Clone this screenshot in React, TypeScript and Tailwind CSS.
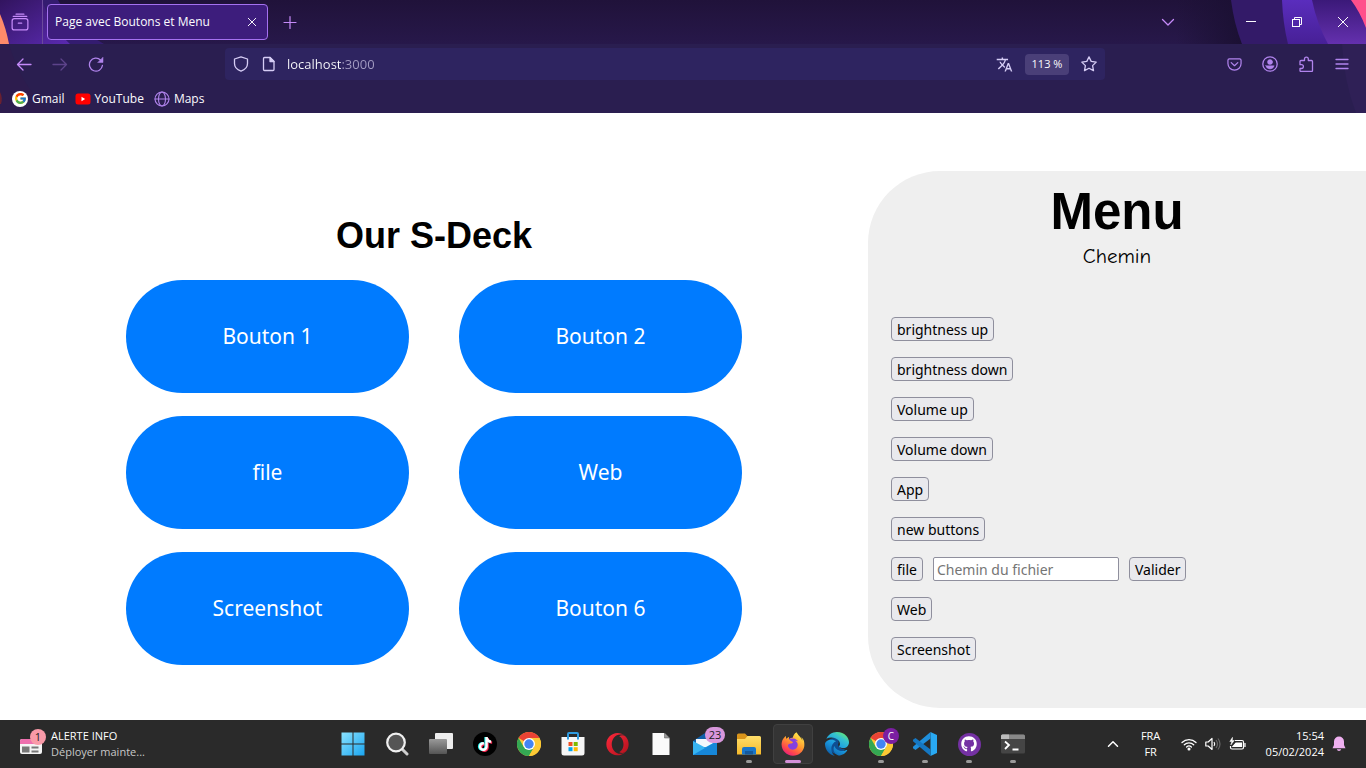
import type { ReactNode } from "react";
import { FcGoogle } from "react-icons/fc";
import { FaTiktok, FaGithub, FaEdge, FaFirefoxBrowser, FaOpera } from "react-icons/fa6";
import { VscVscode } from "react-icons/vsc";
import { MdTranslate } from "react-icons/md";

const deckButtons = ["Bouton 1", "Bouton 2", "file", "Web", "Screenshot", "Bouton 6"];
const menuButtons = ["brightness up", "brightness down", "Volume up", "Volume down", "App", "new buttons"];

function Stroke({ children, size = 16, width = 1.3 }: { children: ReactNode; size?: number; width?: number }) {
  return (
    <svg
      width={size}
      height={size}
      viewBox="0 0 16 16"
      fill="none"
      stroke="currentColor"
      strokeWidth={width}
      strokeLinecap="round"
      strokeLinejoin="round"
      aria-hidden="true"
    >
      {children}
    </svg>
  );
}

function ToolButton({ label, className = "", children }: { label: string; className?: string; children: ReactNode }) {
  return (
    <button type="button" aria-label={label} className={`flex h-8 w-9 items-center justify-center ${className}`}>
      {children}
    </button>
  );
}

function ThemeArt() {
  return (
    <>
      <svg className="pointer-events-none absolute left-0 top-0" width="130" height="113" aria-hidden="true">
        <defs>
          <linearGradient id="leftViolet" x1="0" y1="0" x2="1" y2="1">
            <stop offset="0" stopColor="#32145f" />
            <stop offset="1" stopColor="#5a2ab0" />
          </linearGradient>
        </defs>
        <path d="M0 0H58Q72 26 104 44H0Z" fill="#341c70" />
        <path d="M0 0H42Q50 26 70 44H0Z" fill="url(#leftViolet)" />
        <path d="M0 14Q6 28 9 44H0Z" fill="#ff8a6a" />
        <path d="M0 44H9Q20 84 50 113H0Z" fill="#2d1c4e" />
        <path d="M0 92Q3 98 1 104H0Z" fill="#6a2030" />
      </svg>
      <svg className="pointer-events-none absolute right-0 top-0" width="190" height="113" aria-hidden="true">
        <defs>
          <linearGradient id="rightViolet" x1="0" y1="0" x2="0" y2="1">
            <stop offset="0" stopColor="#5a2dbd" />
            <stop offset="1" stopColor="#472096" />
          </linearGradient>
          <linearGradient id="rightPlum" x1="0" y1="0" x2="0" y2="1">
            <stop offset="0" stopColor="#3b1979" />
            <stop offset="1" stopColor="#6430ae" />
          </linearGradient>
          <linearGradient id="rightShade" x1="0" y1="0" x2="1" y2="0">
            <stop offset="0" stopColor="#1b1033" stopOpacity="0" />
            <stop offset="1" stopColor="#1b1033" />
          </linearGradient>
        </defs>
        <path d="M0 0H56L66 44H0Z" fill="url(#rightShade)" />
        <path d="M55 0Q58 24 66 44H190V0Z" fill="#331a68" />
        <path d="M106 0Q107 24 112 44H190V0Z" fill="url(#rightViolet)" />
        <path d="M136 0Q141 24 152 44H190V0Z" fill="url(#rightPlum)" />
        <path d="M175 0Q184 12 190 28V0Z" fill="#ff4f8b" />
        <path d="M166 44Q168 82 180 113H190V44Z" fill="#2f2056" />
      </svg>
    </>
  );
}

function BrowserChrome() {
  return (
    <header className="relative shrink-0 bg-[#2a1e50] text-[#fbfbfe]">
      <div className="h-11 bg-linear-to-b from-[#20123a] to-[#27184a]" />
      <div className="h-[69px]" />
      <ThemeArt />
      <div className="absolute inset-0 flex flex-col font-['Open_Sans','Noto_Sans',sans-serif]">
        <div className="flex h-11 items-center">
          <button type="button" aria-label="Firefox View" className="flex h-11 w-[43px] items-center justify-center border-r border-[#6b4a9c] pr-0.5 text-[#c58af9]">
            <Stroke size={18} width={1.1}>
              <rect x="1" y="5" width="14" height="10" rx="2" />
              <path d="M2 3h12M4.500 1h7M6.500 9h3" />
            </Stroke>
          </button>
          <div className="ml-1 flex h-9 w-[221px] items-center justify-between rounded border border-[#a571f0] bg-[#3d1d7c] pl-[7px] pr-[7px] text-xs">
            <span>Page avec Boutons et Menu</span>
            <button type="button" aria-label="Fermer l'onglet" className="flex size-4 items-center justify-center">
              <Stroke size={12} width={1.3}>
                <path d="M3 3l10 10M13 3L3 13" />
              </Stroke>
            </button>
          </div>
          <ToolButton label="Nouvel onglet" className="ml-1 text-[#c58af9]">
            <Stroke width={1.2}>
              <path d="M8 2.500v12M2 8.500h12" />
            </Stroke>
          </ToolButton>
          <div className="flex-1" />
          <ToolButton label="Lister les onglets" className="mr-[42px] text-[#c58af9]">
            <Stroke>
              <path d="M2.500 5.500L8 11l5.500-5.500" />
            </Stroke>
          </ToolButton>
          <button type="button" aria-label="Réduire" className="flex h-11 w-[46px] items-center justify-center">
            <svg width="12" height="12" stroke="currentColor" aria-hidden="true"><path d="M1 5.500h10" /></svg>
          </button>
          <button type="button" aria-label="Restaurer" className="flex h-11 w-[46px] items-center justify-center">
            <svg width="12" height="12" fill="none" stroke="currentColor" aria-hidden="true">
              <rect x="1.500" y="3.500" width="7" height="7" />
              <path d="M3.500 3.500v-2h7v7h-2" />
            </svg>
          </button>
          <button type="button" aria-label="Fermer" className="flex h-11 w-[46px] items-center justify-center">
            <svg width="12" height="12" stroke="currentColor" aria-hidden="true"><path d="M1 1l10 10M11 1L1 11" /></svg>
          </button>
        </div>

        <div className="flex h-10 items-center px-1.5 text-[#b184ed]">
          <ToolButton label="Précédent" className="text-[#c58af9]">
            <Stroke><path d="M15 8.500H1.500M7 3L1.500 8.500 7 14" /></Stroke>
          </ToolButton>
          <ToolButton label="Suivant" className="text-[#5d438a]">
            <Stroke><path d="M1 8.500h13.500M9 3l5.500 5.500L9 14" /></Stroke>
          </ToolButton>
          <ToolButton label="Actualiser">
            <Stroke>
              <path d="M14.400 9.500A6.500 6.500 0 1 1 12.500 4" />
              <path d="M15 1.500V6.500H10z" fill="currentColor" strokeWidth="0.500" />
            </Stroke>
          </ToolButton>
          <div className="mx-[111px] flex h-8 flex-1 items-center rounded bg-[#2e2460] pl-2 pr-2 text-[#d6cdf5]">
            <Stroke><path d="M8 .8l6.500 2.200v4.500c0 3.600-2.700 6.300-6.500 7.700C4.200 13.800 1.500 11.100 1.500 7.500V3z" /></Stroke>
            <span className="ml-3 mr-2.5 flex">
              <Stroke>
                <path d="M3.500 1.500H9l4 4v8a1 1 0 0 1-1 1H3.500a1 1 0 0 1-1-1v-11a1 1 0 0 1 1-1z" />
                <path d="M9 1.500v4h4z" fill="currentColor" />
              </Stroke>
            </span>
            <input
              aria-label="Adresse"
              defaultValue="localhost:3000"
              className="min-w-0 flex-1 bg-[linear-gradient(to_right,#fbfbfe_54px,#a49cc3_54px)] bg-clip-text pt-0.5 text-[13px] text-transparent outline-none"
            />
            <button type="button" aria-label="Traduire la page" className="mr-3"><MdTranslate size={17} /></button>
            <button type="button" className="mr-3 h-[21px] w-11 rounded bg-[#4a3f78] text-[11px] text-[#fbfbfe]">113 %</button>
            <button type="button" aria-label="Ajouter aux marque-pages">
              <Stroke><path d="M8 .9l2.200 4.500 5 .7-3.600 3.500.9 5L8 12.200l-4.500 2.400.9-5L.8 6.100l5-.7z" /></Stroke>
            </button>
          </div>
          <ToolButton label="Pocket">
            <Stroke size={15}>
              <path d="M2.500 2h11a1.500 1.500 0 0 1 1.500 1.500V7A7 7 0 0 1 1 7V3.500A1.500 1.500 0 0 1 2.500 2z" />
              <path d="M4.500 6L8 9.300 11.500 6" />
            </Stroke>
          </ToolButton>
          <ToolButton label="Compte">
            <Stroke>
              <circle cx="8" cy="8" r="7.200" />
              <circle cx="8" cy="6" r="2.500" fill="currentColor" strokeWidth="0.500" />
              <path d="M3.800 9.800h8.400Q11 13 8 13T3.800 9.800z" fill="currentColor" strokeWidth="0.500" />
            </Stroke>
          </ToolButton>
          <ToolButton label="Extensions">
            <Stroke>
              <path d="M2 7V5.500a1 1 0 0 1 1-1h3.500V3a1.900 1.900 0 0 1 3.800 0v1.500h3.200a1 1 0 0 1 1 1v9a1 1 0 0 1-1 1H3a1 1 0 0 1-1-1V12.500h1.500a1.900 1.900 0 0 0 0-3.800H2z" />
            </Stroke>
          </ToolButton>
          <ToolButton label="Menu de l'application">
            <Stroke><path d="M2 3.500h12M2 8h12M2 12.500h12" /></Stroke>
          </ToolButton>
        </div>

        <nav aria-label="Marque-pages" className="flex h-[29px] items-center gap-2.5 pl-3 text-xs">
          <a href="#gmail" className="flex items-center gap-1">
            <span className="flex size-4 items-center justify-center rounded-full bg-white"><FcGoogle size={13} /></span>
            Gmail
          </a>
          <a href="#youtube" className="flex items-center gap-1">
            <svg width="16" height="16" aria-hidden="true">
              <rect x="0.500" y="2.500" width="15" height="11" rx="2.500" fill="#f00" />
              <path d="M6.500 5.800v4.400l3.600-2.200z" fill="#fff" />
            </svg>
            YouTube
          </a>
          <a href="#maps" className="flex items-center gap-1">
            <span className="text-[#b184ed]">
              <Stroke width={1.1}>
                <circle cx="8" cy="8" r="7" />
                <ellipse cx="8" cy="8" rx="3.500" ry="7" />
                <path d="M1 8h14" />
              </Stroke>
            </span>
            Maps
          </a>
        </nav>
      </div>
    </header>
  );
}

function MenuButton({ children }: { children: ReactNode }) {
  return (
    <button type="button" className="h-6 rounded border border-[#8f8f9d] bg-[#e9e9ed] px-[5px] pt-px text-sm leading-5 text-black">
      {children}
    </button>
  );
}

function DeckPage() {
  return (
    <main className="flex flex-1 bg-white font-['Noto_Sans','Open_Sans',sans-serif] text-black">
      <section className="flex flex-1 flex-col items-center pt-[101px]">
        <h1 className="mb-[22px] font-['Liberation_Sans',Arial,sans-serif] text-4xl leading-11 font-bold">Our S-Deck</h1>
        <div className="grid grid-cols-2 gap-x-[50px] gap-y-[23px]">
          {deckButtons.map((label) => (
            <button key={label} type="button" className="h-[113px] w-[283px] rounded-full bg-[#007bff] text-[21px] text-white">
              {label}
            </button>
          ))}
        </div>
      </section>
      <aside className="mt-[58px] mb-3 w-[498px] shrink-0 rounded-l-[72px] bg-[#efefef] pt-[13px] pb-[47px]">
        <h2 className="text-center font-['Liberation_Sans',Arial,sans-serif] text-[51px] leading-14 font-bold">Menu</h2>
        <p className="mt-0.5 text-center font-['Comic_Sans_MS','Comic_Neue',cursive] text-[21px] leading-7">Chemin</p>
        <ul className="mt-[47px] flex flex-col gap-4 pl-[23px]">
          {menuButtons.map((label) => (
            <li key={label} className="flex"><MenuButton>{label}</MenuButton></li>
          ))}
          <li className="flex gap-2.5">
            <MenuButton>file</MenuButton>
            <input
              aria-label="Chemin du fichier"
              placeholder="Chemin du fichier"
              className="h-6 w-[186px] rounded-xs border border-[#8f8f9d] bg-white px-[3px] text-sm leading-5 placeholder:text-[#757575]"
            />
            <MenuButton>Valider</MenuButton>
          </li>
          <li className="flex"><MenuButton>Web</MenuButton></li>
          <li className="flex"><MenuButton>Screenshot</MenuButton></li>
        </ul>
      </aside>
    </main>
  );
}

function ChromeLogo() {
  return (
    <svg width="24" height="24" viewBox="0 0 24 24" aria-hidden="true">
      <circle cx="12" cy="12" r="12" fill="#fcc934" />
      <path d="M12 12L1.600 6A12 12 0 0 1 22.400 6H12z" fill="#ea4335" />
      <path d="M1.600 6A12 12 0 0 0 12 24L17.200 15 12 12 6.800 15z" fill="#34a853" />
      <path d="M12 6h10.400A12 12 0 0 1 12 24l5.200-9z" fill="#fcc934" />
      <circle cx="12" cy="12" r="6" fill="#fff" />
      <circle cx="12" cy="12" r="4.700" fill="#4285f4" />
    </svg>
  );
}

function TaskIcon({
  label,
  running = false,
  active = false,
  children,
}: {
  label: string;
  running?: boolean;
  active?: boolean;
  children: ReactNode;
}) {
  return (
    <button type="button" aria-label={label} className="relative flex h-12 w-11 items-center justify-center">
      {active && <span className="absolute inset-x-0.5 inset-y-1 rounded border border-[#404040] bg-[#343434]" />}
      <span className="relative flex size-6 items-center justify-center">{children}</span>
      {running && !active && <span className="absolute bottom-[5px] h-[3px] w-1.5 rounded-full bg-[#9a9a9a]" />}
      {active && <span className="absolute bottom-[5px] h-[3px] w-4 rounded-full bg-[#d490d8]" />}
    </button>
  );
}

function Taskbar() {
  return (
    <footer className="flex h-12 shrink-0 items-center bg-[#2a2a2a] font-['Open_Sans','Noto_Sans',sans-serif] text-[11px] leading-4 text-white">
      <svg width="0" height="0" className="absolute" aria-hidden="true">
        <defs>
          <linearGradient id="edgeFill" x1="0.200" y1="1" x2="0.800" y2="0">
            <stop offset="0" stopColor="#0c59a4" />
            <stop offset="0.450" stopColor="#1b9de2" />
            <stop offset="0.750" stopColor="#35c1d0" />
            <stop offset="1" stopColor="#66eb6e" />
          </linearGradient>
          <linearGradient id="foxFill" x1="0.800" y1="0" x2="0.200" y2="1">
            <stop offset="0" stopColor="#fff44f" />
            <stop offset="0.450" stopColor="#ff9a2e" />
            <stop offset="0.750" stopColor="#ff4a4a" />
            <stop offset="1" stopColor="#e31587" />
          </linearGradient>
          <linearGradient id="operaFill" x1="0" y1="0" x2="1" y2="1">
            <stop offset="0" stopColor="#ff2a3c" />
            <stop offset="1" stopColor="#b0101c" />
          </linearGradient>
          <linearGradient id="winFill" x1="0" y1="0" x2="1" y2="1">
            <stop offset="0" stopColor="#8ae2ff" />
            <stop offset="1" stopColor="#1aa5f0" />
          </linearGradient>
          <linearGradient id="folderFill" x1="0" y1="0" x2="0" y2="1">
            <stop offset="0" stopColor="#ffdf6b" />
            <stop offset="1" stopColor="#f5b92b" />
          </linearGradient>
          <linearGradient id="paneFill" x1="0" y1="0" x2="0" y2="1">
            <stop offset="0" stopColor="#999" />
            <stop offset="1" stopColor="#555" />
          </linearGradient>
        </defs>
      </svg>

      <div className="flex flex-1 items-center pl-5">
        <button type="button" className="flex items-center gap-1 text-left">
          <svg width="27" height="30" aria-hidden="true">
            <rect x="0" y="10" width="22" height="15" rx="2" fill="#f4f4f4" />
            <path d="M0 15v-3a2 2 0 0 1 2-2h20v5z" fill="#ee6fae" />
            <rect x="2" y="17.500" width="7.500" height="6" fill="#777" />
            <path d="M11.500 18.500h7M11.500 22.500h7" stroke="#777" strokeWidth="2" />
            <circle cx="18" cy="8" r="8" fill="#f99aa8" />
            <text x="18" y="12" textAnchor="middle" fontSize="11" fill="#222">1</text>
          </svg>
          <span>
            <span className="block">ALERTE INFO</span>
            <span className="block text-[#c8c8c8]">Déployer mainte...</span>
          </span>
        </button>
      </div>

      <nav aria-label="Barre des tâches" className="flex">
        <TaskIcon label="Démarrer">
          <svg width="24" height="24" fill="url(#winFill)" aria-hidden="true">
            <path d="M.5.500h11v11H.5zM12.500.500h11v11h-11zM.5 12.500h11v11H.5zM12.500 12.500h11v11h-11z" />
          </svg>
        </TaskIcon>
        <TaskIcon label="Rechercher">
          <svg width="24" height="24" fill="none" aria-hidden="true">
            <path d="M17 17l5 5" stroke="#cfcfcf" strokeWidth="3" strokeLinecap="round" />
            <circle cx="11" cy="10.500" r="8.800" fill="#555" stroke="#f0f0f0" strokeWidth="2.200" />
          </svg>
        </TaskIcon>
        <TaskIcon label="Vue des tâches">
          <svg width="24" height="24" aria-hidden="true">
            <rect x="6" y="1" width="18" height="16" rx="1" fill="#ededed" />
            <rect x="0" y="7" width="18" height="15" rx="1" fill="url(#paneFill)" />
          </svg>
        </TaskIcon>
        <TaskIcon label="TikTok">
          <span className="relative flex size-6 items-center justify-center rounded-full bg-black">
            <FaTiktok size={14} className="absolute translate-x-px translate-y-px text-[#fe2c55]" />
            <FaTiktok size={14} className="absolute -translate-x-px text-[#25f4ee]" />
            <FaTiktok size={14} className="absolute text-white" />
          </span>
        </TaskIcon>
        <TaskIcon label="Google Chrome"><ChromeLogo /></TaskIcon>
        <TaskIcon label="Microsoft Store">
          <svg width="24" height="24" aria-hidden="true">
            <path d="M7 6V2a1 1 0 0 1 1-1h8a1 1 0 0 1 1 1v4" fill="none" stroke="#2f9be0" strokeWidth="2" />
            <path d="M.5 5h23v16a2.500 2.500 0 0 1-2.500 2.500H3A2.500 2.500 0 0 1 .5 21z" fill="#f6f6f6" />
            <path d="M7.500 10h4v4h-4z" fill="#f25022" />
            <path d="M12.700 10h4v4h-4z" fill="#7fba00" />
            <path d="M7.500 15.200h4v4h-4z" fill="#00a4ef" />
            <path d="M12.700 15.200h4v4h-4z" fill="#ffb900" />
            <path d="M7 4.500v3M17 4.500v3" stroke="#2f9be0" strokeWidth="2" />
          </svg>
        </TaskIcon>
        <TaskIcon label="Opera"><FaOpera size={23} fill="url(#operaFill)" stroke="none" /></TaskIcon>
        <TaskIcon label="Document">
          <svg width="24" height="24" aria-hidden="true">
            <path d="M3.500 1h12l5 5v17h-17z" fill="#fafafa" />
            <path d="M15.500 1v5h5z" fill="#999" stroke="#555" strokeWidth="0.500" />
          </svg>
        </TaskIcon>
        <TaskIcon label="Courrier">
          <svg width="24" height="24" aria-hidden="true">
            <path d="M0 9L12 1l12 8v14H0z" fill="#0f5fa8" />
            <path d="M3 7h18v8H3z" fill="#f2f7fb" />
            <path d="M0 9l12 6.500L24 9v14H0z" fill="#37b4f2" />
            <path d="M0 23L24 9v14z" fill="#1687d9" />
          </svg>
          <span className="absolute left-3 -top-[5px] h-4 w-5 rounded-full bg-[#d897dc] text-center text-[11px] leading-4 text-[#222]">23</span>
        </TaskIcon>
        <TaskIcon label="Explorateur de fichiers" running>
          <svg width="24" height="24" aria-hidden="true">
            <path d="M0 3a1.500 1.500 0 0 1 1.500-1.500H8L10.500 4H22v8H0z" fill="#d9941a" />
            <path d="M0 7h8l2.500-3H22.500A1.500 1.500 0 0 1 24 5.500V22.500H0z" fill="url(#folderFill)" />
            <path d="M5 22.500V17a2 2 0 0 1 2-2h10a2 2 0 0 1 2 2v5.500z" fill="#1976c9" />
            <path d="M8 19h8v3.500H8z" fill="#15599c" />
          </svg>
        </TaskIcon>
        <TaskIcon label="Firefox" active>
          <svg width="24" height="24" className="absolute" aria-hidden="true"><circle cx="12" cy="12.500" r="7" fill="#8440df" /></svg>
          <FaFirefoxBrowser size={24} fill="url(#foxFill)" stroke="none" className="relative" />
        </TaskIcon>
        <TaskIcon label="Microsoft Edge">
          <svg width="24" height="24" className="absolute" aria-hidden="true"><path d="M3 12Q3 5 11 6Q15 8 13 13Q14 17 20 17Q17 22 11 22Q3 20 3 12z" fill="#0e4f93" /></svg>
          <FaEdge size={24} fill="url(#edgeFill)" stroke="none" className="relative" />
        </TaskIcon>
        <TaskIcon label="Google Chrome, profil C" running>
          <ChromeLogo />
          <span className="absolute left-3.5 -top-1 size-4 rounded-full bg-[#7b1fa2] text-center text-[10px] leading-4">C</span>
        </TaskIcon>
        <TaskIcon label="Visual Studio Code" running>
          <svg width="24" height="24" viewBox="0 0 24 24" aria-hidden="true">
            <path d="M17.500 0L24 3v18l-6.500 3z" fill="#29a9f2" />
            <path d="M17.500 0v6.500L2.500 18 0 16.200v-1.500z" fill="#1f8fdc" />
            <path d="M17.500 24v-6.500L2.500 6 0 7.800v1.500z" fill="#1577c2" />
          </svg>
        </TaskIcon>
        <TaskIcon label="GitHub Desktop" running>
          <span className="flex size-[23px] items-center justify-center rounded-full bg-[#7431a3]"><FaGithub size={16} className="text-white" /></span>
        </TaskIcon>
        <TaskIcon label="Terminal" running>
          <svg width="24" height="24" aria-hidden="true">
            <rect x="0" y="2.500" width="24" height="19" rx="1.500" fill="#454545" />
            <path d="M0 7V4a1.500 1.500 0 0 1 1.500-1.500h21A1.500 1.500 0 0 1 24 4v3z" fill="#888" />
            <path d="M0 7V4a1.500 1.500 0 0 1 1.500-1.500H8V7z" fill="#bbb" />
            <path d="M4 9.500l4 3.500-4 4M11.500 17.500h6" fill="none" stroke="#fff" strokeWidth="1.800" />
          </svg>
        </TaskIcon>
      </nav>

      <div className="flex flex-1 items-center justify-end pr-5">
        <button type="button" aria-label="Afficher les icônes cachées" className="mr-5">
          <Stroke size={12} width={2}><path d="M2 11l6-6 6 6" /></Stroke>
        </button>
        <button type="button" className="mr-[18px] w-6 text-center">FRA<br />FR</button>
        <button type="button" aria-label="Réseau, son et batterie" className="mr-5 flex items-center gap-2">
          <svg width="16" height="14" viewBox="0 0 16 14" fill="none" stroke="#fff" strokeWidth="1.300" strokeLinecap="round" aria-hidden="true">
            <path d="M1 5.500a10 10 0 0 1 14 0" />
            <path d="M3.300 7.800a6.800 6.800 0 0 1 9.400 0" />
            <path d="M5.600 10a3.500 3.500 0 0 1 4.800 0" />
            <circle cx="8" cy="12" r="0.900" fill="#fff" />
          </svg>
          <svg width="16" height="14" viewBox="0 0 16 14" fill="none" stroke="#fff" strokeWidth="1.200" strokeLinejoin="round" aria-hidden="true">
            <path d="M.8 5h2.400L7 1.500v11L3.200 9H.8z" />
            <path d="M9 5q1.500 2 0 4" />
            <path d="M11 3q3 4 0 8M13 1.500q4 5.500 0 11" stroke="#666" />
          </svg>
          <svg width="17" height="14" viewBox="0 0 17 14" fill="none" stroke="#fff" strokeWidth="1.200" aria-hidden="true">
            <path d="M6 3.500h7a1.500 1.500 0 0 1 1.500 1.500v5.500A1.500 1.500 0 0 1 13 12H3a1.500 1.500 0 0 1-1.500-1.500V9M16 6v4" />
            <path d="M7 6h5.500v3.500H4z" fill="#fff" />
            <path d="M3.500.300L.8 4.500h2L1.800 8l3.500-4.500h-2z" fill="#fff" strokeWidth="0.500" />
          </svg>
        </button>
        <button type="button" className="mr-2 text-right">15:54<br />05/02/2024</button>
        <button type="button" aria-label="Notifications">
          <svg width="14" height="16" viewBox="0 0 14 16" fill="#efb0f0" aria-hidden="true">
            <path d="M7 .5a5 5 0 0 1 5 5v3.500l1.500 3.200H.5L2 9V5.500a5 5 0 0 1 5-5zM4.800 13.200h4.400Q8.800 15 7 15t-2.200-1.800z" />
          </svg>
        </button>
      </div>
    </footer>
  );
}

export default function App() {
  return (
    <div className="flex min-h-screen flex-col">
      <BrowserChrome />
      <DeckPage />
      <Taskbar />
    </div>
  );
}
